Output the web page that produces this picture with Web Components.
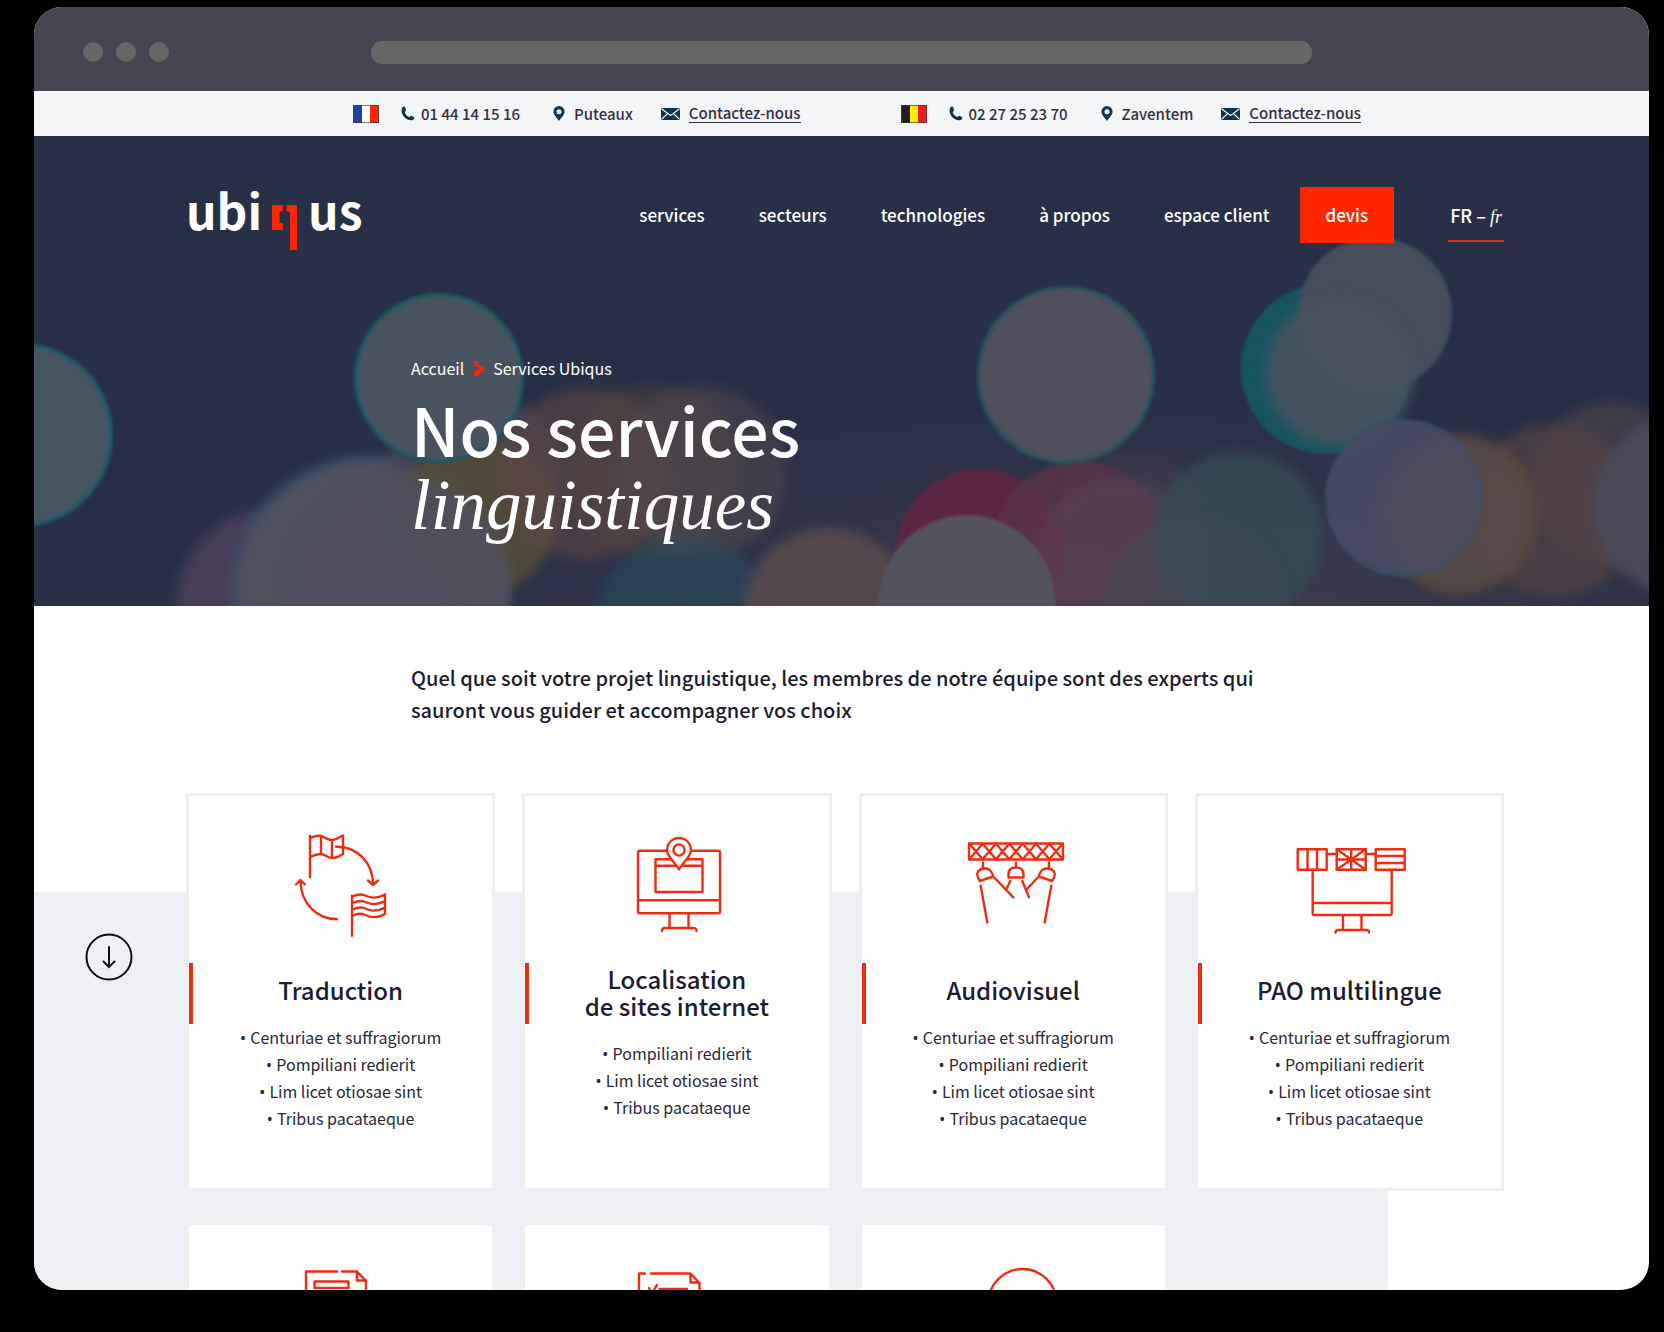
<!DOCTYPE html>
<html lang="fr">
<head>
<meta charset="utf-8">
<meta name="viewport" content="width=device-width, initial-scale=1">
<title>Ubiqus - Nos services linguistiques</title>
<style>
	:root {
		--red: #ff2600;
		--line-red: #ee2c12;
		--ink: #1d1b30;
		--grey: #eff0f4;
		--sans: "Noto Sans CJK SC", "Noto Sans", sans-serif;
		--serif: "Liberation Serif", serif;
	}
	body {
		margin: 0;
		background: #000;
		color: var(--ink);
		font-family: var(--sans);
	}
</style>
</head>
<body>
<browser-window>
	<top-bar>
		<contact-group country="fr" phone="01 44 14 15 16" city="Puteaux"></contact-group>
		<contact-group country="be" phone="02 27 25 23 70" city="Zaventem"></contact-group>
	</top-bar>
	<hero-banner>
		<site-nav slot="nav"></site-nav>
		<span slot="parent">Accueil</span>
		<span slot="current">Services Ubiqus</span>
		<span slot="title">Nos services</span>
		<em slot="subtitle">linguistiques</em>
	</hero-banner>
	<services-section>
		<p slot="intro">Quel que soit votre projet linguistique, les membres de notre équipe sont des experts qui sauront vous guider et accompagner vos choix</p>
		<service-card icon="translate">
			<span slot="title">Traduction</span>
			<li>Centuriae et suffragiorum</li>
			<li>Pompiliani redierit</li>
			<li>Lim licet otiosae sint</li>
			<li>Tribus pacataeque</li>
		</service-card>
		<service-card icon="localise" two-lines>
			<span slot="title">Localisation<br>de sites internet</span>
			<li>Pompiliani redierit</li>
			<li>Lim licet otiosae sint</li>
			<li>Tribus pacataeque</li>
		</service-card>
		<service-card icon="lights">
			<span slot="title">Audiovisuel</span>
			<li>Centuriae et suffragiorum</li>
			<li>Pompiliani redierit</li>
			<li>Lim licet otiosae sint</li>
			<li>Tribus pacataeque</li>
		</service-card>
		<service-card icon="publish">
			<span slot="title">PAO multilingue</span>
			<li>Centuriae et suffragiorum</li>
			<li>Pompiliani redierit</li>
			<li>Lim licet otiosae sint</li>
			<li>Tribus pacataeque</li>
		</service-card>
		<service-card icon="report"></service-card>
		<service-card icon="checklist"></service-card>
		<service-card icon="round"></service-card>
	</services-section>
</browser-window>

<script>
class BrowserWindow extends HTMLElement {
	constructor() {
		super();
		this.attachShadow({ mode: "open" }).innerHTML = `
			<style>
				:host {
					display: flex;
					flex-direction: column;
					box-sizing: border-box;
					height: 100vh;
					padding: 7px 15px 42px 34px;
				}
				.frame {
					flex: 1;
					min-height: 0;
					overflow: hidden;
					border-radius: 28px;
					background: #fff;
				}
				.chrome {
					display: grid;
					grid-template-columns: 337px 1fr 337px;
					align-items: center;
					height: 84px;
					padding-top: 6px;
					box-sizing: border-box;
					background: #474350;
				}
				.dots {
					display: flex;
					gap: 13px;
					padding-left: 49px;
				}
				.dots i {
					width: 20px;
					height: 20px;
					border-radius: 50%;
					background: #676767;
				}
				.address {
					height: 23px;
					border-radius: 11px;
					background: #676767;
				}
			</style>
			<div class="frame">
				<div class="chrome">
					<div class="dots"><i></i><i></i><i></i></div>
					<div class="address"></div>
				</div>
				<slot></slot>
			</div>
		`;
	}
}

class TopBar extends HTMLElement {
	constructor() {
		super();
		this.attachShadow({ mode: "open" }).innerHTML = `
			<style>
				:host {
					display: flex;
					justify-content: center;
					align-items: center;
					gap: 100px;
					height: 45px;
					padding-left: 31px;
					background: #f4f5f7;
				}
			</style>
			<slot></slot>
		`;
	}
}

const FLAGS = {
	fr: ["#21409a", "#ffffff", "#ff2600"],
	be: ["#231f20", "#ffee00", "#ed1c24"],
};

class ContactGroup extends HTMLElement {
	connectedCallback() {
		const [a, b, c] = FLAGS[this.getAttribute("country")];
		this.attachShadow({ mode: "open" }).innerHTML = `
			<style>
				:host {
					display: flex;
					align-items: center;
					color: #35303f;
					font-size: 15px;
					line-height: 24px;
					font-weight: 500;
				}
				.flag { margin-right: 22px; }
				.item {
					display: flex;
					align-items: center;
					white-space: nowrap;
				}
				.phone { gap: 6px; margin-right: 33px; }
				.city { gap: 9px; margin-right: 28px; }
				.mail { gap: 9px; }
				a { color: inherit; text-decoration: none; }
				.mail a { border-bottom: 1px solid; line-height: 18px; }
				svg { display: block; fill: #12354a; }
			</style>
			<svg class="flag" width="26" height="18" viewBox="0 0 26 18">
				<rect width="9" height="18" fill="${a}"/>
				<rect x="9" width="9" height="18" fill="${b}"/>
				<rect x="17" width="9" height="18" fill="${c}"/>
				<rect x=".5" y=".5" width="25" height="17" fill="none" stroke="#4a3a40" stroke-width="1" opacity=".7"/>
			</svg>
			<div class="item phone">
				<svg width="14" height="15" viewBox="0 0 14 15"><path d="M1.400 1.200C2.400.2 3.800.1 4.300 1.200L5 4.200C5 5.300 3.700 5.300 3.700 6.200C4 8.100 6.200 10.400 8.200 10.900C9.200 11 9.200 9.700 10.200 9.700L13 11C13.900 11.800 13 13.200 11.800 14C6.800 16-2.200 8.800 1.400 1.200Z"/></svg>
				<a href="#">${this.getAttribute("phone")}</a>
			</div>
			<div class="item city">
				<svg width="12" height="15" viewBox="0 0 12 15"><path fill-rule="evenodd" d="M6 0a5.600 5.600 0 0 1 5.600 5.600C11.600 9 8 12 6 15 4 12 .4 9 .4 5.600A5.600 5.600 0 0 1 6 0Zm0 3.200a2.500 2.500 0 1 0 0 5 2.500 2.500 0 0 0 0-5Z"/></svg>
				<span>${this.getAttribute("city")}</span>
			</div>
			<div class="item mail">
				<svg width="19" height="12" viewBox="0 0 19 12"><rect width="19" height="12" rx="1"/><path d="M.5.8 9.500 7.500 18.500.8M.5 11.300 6.600 5.600M18.500 11.300 12.400 5.600" fill="none" stroke="#f4f5f7" stroke-width="1.200"/></svg>
				<a href="#">Contactez-nous</a>
			</div>
		`;
	}
}

class SiteLogo extends HTMLElement {
	constructor() {
		super();
		this.attachShadow({ mode: "open" }).innerHTML = `
			<style>
				:host { display: block; }
				a {
					display: flex;
					align-items: flex-start;
					gap: 10px;
					color: #fff;
					font-size: 48px;
					line-height: 44px;
					font-weight: 700;
					text-decoration: none;
				}
				svg { margin-top: 17px; }
			</style>
			<a href="#" aria-label="ubiqus">
				<span>ubi</span>
				<svg width="26" height="47" viewBox="0 0 26 47" fill="#ff2600"><path d="M0 1H11V7L7.500 8V18.500L11 19.500V26H0Z"/><path d="M14.500 1H25V46H18V8L14.500 7Z"/></svg>
				<span>us</span>
			</a>
		`;
	}
}

class SiteNav extends HTMLElement {
	constructor() {
		super();
		this.attachShadow({ mode: "open" }).innerHTML = `
			<style>
				:host {
					display: flex;
					justify-content: space-between;
					align-items: flex-start;
					color: #fff;
					font-size: 17px;
					line-height: 26px;
					font-weight: 500;
				}
				.right, nav { display: flex; align-items: center; }
				nav { gap: 54px; }
				a { color: inherit; text-decoration: none; white-space: nowrap; }
				.quote {
					margin-left: 30px;
					padding: 15px 26px;
					background: var(--red);
				}
				button {
					margin: 0 0 0 54px;
					padding: 14px 2px 12px;
					border: 0;
					border-bottom: 2px solid #e02b1a;
					background: none;
					color: inherit;
					font: inherit;
					font-size: 18px;
				}
				button em { font-family: var(--serif); font-weight: 400; line-height: 18px; }
			</style>
			<site-logo></site-logo>
			<div class="right">
				<nav>
					<a href="#">services</a>
					<a href="#">secteurs</a>
					<a href="#">technologies</a>
					<a href="#">à propos</a>
					<a href="#">espace client</a>
				</nav>
				<a class="quote" href="#">devis</a>
				<button type="button">FR – <em>fr</em></button>
			</div>
		`;
	}
}

// Out of focus street lights: cx, cy, r, fill, opacity, blur (1 = sharp, 2 = soft), rim colour
const LIGHTS = [
	[240, 470, 98, "#55455f", 0.7, 2],
	[335, 458, 136, "#50515f", 1, 2, "#25506a"],
	[440, 345, 90, "#4b4a5a", 0.6, 2],
	[445, 380, 78, "#554e38", 0.85, 2],
	[552, 338, 86, "#5e4444", 0.6, 2],
	[620, 335, 86, "#57463e", 0.45, 2],
	[667, 336, 86, "#55484f", 0.5, 2],
	[650, 490, 90, "#24505d", 0.5, 2],
	[365, 455, 112, "#50505f", 0.9, 2],
	[-13, 299, 90, "#475460", 1, 1, "#1b5a66"],
	[405, 242, 83, "#49535f", 1, 1, "#1a5862"],
	[794, 476, 84, "#58494d", 0.9, 2],
	[1100, 400, 84, "#463a4e", 0.5, 2],
	[946, 417, 84, "#5c2744", 1, 1],
	[1045, 413, 88, "#5b3048", 0.75, 1],
	[1085, 425, 84, "#58485a", 0.4, 2],
	[1205, 399, 84, "#354b54", 0.8, 2],
	[1160, 470, 90, "#3d4b55", 0.5, 2],
	[1032, 239, 87, "#50505d", 1, 1, "#2a525d"],
	[933, 467, 88, "#52525e", 1, 1],
	[1578, 346, 80, "#50444c", 0.6, 2],
	[1520, 374, 86, "#544344", 0.7, 2],
	[1425, 378, 80, "#59463a", 0.9, 2],
	[1292, 233, 85, "#17545f", 1, 1],
	[1341, 178, 75, "#464e5a", 1, 1, "#3c505b"],
	[1306, 236, 74, "#47525f", 0.9, 2],
	[1370, 362, 77, "#464c62", 0.95, 1, "#3a4d64"],
	[1425, 378, 74, "#56505c", 0.35, 2],
	[1650, 370, 90, "#4c4c5b", 0.9, 2],
];

class HeroBanner extends HTMLElement {
	constructor() {
		super();
		const lights = LIGHTS.map(
			([cx, cy, r, fill, opacity, blur, rim]) =>
				`<circle cx="${cx}" cy="${cy}" r="${r}" fill="${fill}" opacity="${opacity}" filter="url(#b${blur})" ${rim ? `stroke="${rim}" stroke-width="4"` : ""}/>`
		).join("");
		this.attachShadow({ mode: "open" }).innerHTML = `
			<style>
				:host {
					display: block;
					position: relative;
					overflow: hidden;
					background: #283047;
					color: #fff;
				}
				.bokeh {
					position: absolute;
					inset: 0;
					width: 100%;
					height: 100%;
				}
				.content {
					position: relative;
					padding: 51px 145px 60px 152px;
				}
				.text { padding: 105px 0 0 225px; }
				.crumbs {
					display: flex;
					align-items: center;
					gap: 9px;
					font-size: 16px;
					line-height: 24px;
				}
				h1 {
					margin: 12px 0 0;
					font-size: 66px;
					line-height: 72px;
					font-weight: 500;
				}
				h1 slot { display: block; }
				.sub {
					font-family: var(--serif);
					font-size: 71px;
					line-height: 82px;
					font-weight: 400;
				}
			</style>
			<svg class="bokeh" viewBox="0 0 1615 470" preserveAspectRatio="xMidYMax slice">
				<defs>
					<filter id="b1"><feGaussianBlur stdDeviation="1.500"/></filter>
					<filter id="b2" x="-20%" y="-20%" width="140%" height="140%"><feGaussianBlur stdDeviation="6"/></filter>
					<radialGradient id="haze">
						<stop offset="0" stop-color="#484150" stop-opacity=".8"/>
						<stop offset="1" stop-color="#443e50" stop-opacity="0"/>
					</radialGradient>
				</defs>
				<ellipse cx="1100" cy="480" rx="760" ry="210" fill="url(#haze)"/>
				${lights}
			</svg>
			<div class="content">
				<slot name="nav"></slot>
				<div class="text">
					<div class="crumbs">
						<slot name="parent"></slot>
						<svg width="11" height="15" viewBox="0 0 11 15" fill="#ff2600"><path d="M1 0H5V4H8V6H11V10H8V12H6V15H1V11H3V9H6V6H3V4H1Z"/></svg>
						<slot name="current"></slot>
					</div>
					<h1>
						<slot name="title"></slot>
						<slot class="sub" name="subtitle"></slot>
					</h1>
				</div>
			</div>
		`;
	}
}

class ServicesSection extends HTMLElement {
	constructor() {
		super();
		this.attachShadow({ mode: "open" }).innerHTML = `
			<style>
				:host { display: block; }
				.intro {
					padding: 56px 340px 0 377px;
					font-size: 20px;
					line-height: 32px;
					font-weight: 500;
				}
				::slotted(p) { margin: 0; }
				.body {
					position: relative;
					padding: 67px 145px 60px 152px;
				}
				.back {
					position: absolute;
					inset: 166px 261px 0 0;
					background: var(--grey);
				}
				.grid {
					position: relative;
					display: grid;
					grid-template-columns: repeat(4, 1fr);
					gap: 31px 27px;
				}
				.down {
					position: absolute;
					top: 207px;
					left: 51px;
					width: 48px;
					height: 48px;
					padding: 0;
					border: 0;
					background: none;
				}
				.down svg {
					display: block;
					fill: none;
					stroke: #0d0d14;
					stroke-width: 2;
					stroke-linecap: round;
				}
			</style>
			<div class="intro"><slot name="intro"></slot></div>
			<div class="body">
				<div class="back"></div>
				<button class="down" type="button" aria-label="Descendre">
					<svg width="48" height="48" viewBox="0 0 48 48"><circle cx="24" cy="24" r="22.500"/><path d="M24 14V34M18.500 28.500L24 34L29.500 28.500"/></svg>
				</button>
				<div class="grid"><slot></slot></div>
			</div>
		`;
	}
}

const ICONS = {
	translate: `
		<path d="M29 6V47M29 8C33 7 36 5 40 6C44 7 46 10 51 10C55 10 59 7 62 5.500V24C59 26 55 28 51 28C46 28 44 24 40 24C36 24 33 25 29 27M40 6V24M51 10V28"/>
		<path d="M55 16.700C76 16 92 33 92 54M87 50.500L92 55L97 50.500"/>
		<path d="M56 89.300C36 89 20 74 19.500 51M15 54.500L19.500 50L24 54.500"/>
		<path d="M71 65.700V105.700M104 64.500V83M71 66.500C75 65 79 63.500 83 65C88 67 93 70 104 64.500M71 73C75 71.500 79 70 83 71.500C88 73.500 93 76.500 104 71M71 79.500C75 78 79 76.500 83 78C88 80 93 83 104 77.500M71 86C75 84 79 83 83 84.500C88 87 95 89.500 104 84"/>`,
	localise: `
		<rect x="21" y="20.700" width="82" height="62.500" rx="2"/>
		<path d="M21 70.300H103M38.500 29.300H85.500V62H38.500ZM38.500 35.700H85.500M52.500 83V97.500M71.500 83V97.500M45 101C45 98.500 46 98 48 98H76C78.500 98 79.500 98.500 79.500 101"/>
		<path fill="#fff" d="M62 39.300C58 32 50 27 50 20A12 12 0 0 1 74 20C74 27 66 32 62 39.300Z"/>
		<circle cx="62" cy="20" r="5.600"/>`,
	lights: `
		<path d="M16 13.500H110V29.500H16Z"/>
		<path d="M17 14.500L29 28.500M29 14.500L17 28.500M30.300 14.500L42.300 28.500M42.300 14.500L30.300 28.500M43.600 14.500L55.600 28.500M55.600 14.500L43.600 28.500M57 14.500L69 28.500M69 14.500L57 28.500M70.400 14.500L82.400 28.500M82.400 14.500L70.400 28.500M83.700 14.500L95.700 28.500M95.700 14.500L83.700 28.500M97 14.500L109 28.500M109 14.500L97 28.500"/>
		<path d="M63 32.500V37M30 32.500V38M96 32.500V38M55.500 47.500V44C55.500 40 58 37.500 63 37.500S70.500 40 70.500 44V47.500Z"/>
		<path d="M26.700 51C22.500 44 24 40.500 29 39C34 37.500 38 38.500 40.300 46.500ZM99.300 51C103.500 44 102 40.500 97 39C92 37.500 88 38.500 85.700 46.500Z"/>
		<path d="M27.700 55.700L34.300 92.500M41.700 48L60.300 67.300M57.300 51L53.500 59M98.300 55.700L91.700 92.500M84.300 48L74 59M69.300 51L76 67.300"/>`,
	publish: `
		<path d="M8.700 19.300H37.700V39.700H8.700ZM47.700 19.300H76.700V39.700H47.700ZM86.700 19.300H115.700V39.700H86.700ZM18.500 19.300V39.700M28 19.300V39.700M86.700 26H115.700M86.700 33H115.700"/>
		<path d="M47.700 19.300L76.700 39.700M76.700 19.300L47.700 39.700M62.200 19.300V39.700M47.700 29.500H76.700M37.700 24H47.700M76.700 24H86.700"/>
		<path d="M23.700 39.700V83.500C23.700 84.500 24.200 85 25.200 85H101.200C102.200 85 102.700 84.500 102.700 83.500V39.700M23.700 73H102.700M54 85V99.500M72.500 85V99.500M46.500 102.500C46.500 100.500 47.500 100 49.500 100H77C79 100 80 100.500 80 102.500"/>`,
	report: `
		<path d="M25 110V12.500H56M61 12.500H76L85 22V110M76 12.500V21.500H85M33.500 22.500H67.500V29H33.500Z"/>`,
	checklist: `
		<path d="M22 110V14.500H28M34 14.500H73.500L82.500 24V110M73.500 14.500V23.500H82.500M42.500 30H70M32 29L35 34L40 26"/>`,
	round: `<circle cx="69.500" cy="44" r="34"/>`,
};

class ServiceCard extends HTMLElement {
	connectedCallback() {
		const titled = this.querySelector("[slot=title]");
		this.attachShadow({ mode: "open" }).innerHTML = `
			<style>
				:host {
					display: block;
					min-height: 391px;
					border: 3px solid var(--grey);
					background: #fff;
					text-align: center;
				}
				svg {
					display: block;
					margin: 34px auto 23px;
					fill: none;
					stroke: var(--line-red);
					stroke-width: 2.400;
					stroke-linecap: round;
					stroke-linejoin: round;
				}
				h2 {
					display: flex;
					justify-content: center;
					align-items: center;
					box-sizing: border-box;
					height: 61px;
					margin: 0;
					padding: 0 4px 8px 0;
					border-left: 4px solid var(--line-red);
					font-size: 24px;
					line-height: 27px;
					font-weight: 500;
				}
				ul {
					margin: 0;
					padding: 0 0 56px;
					color: #2a2838;
					font-size: 16px;
					line-height: 27px;
					list-style: none;
				}
				:host([two-lines]) h2 { padding-bottom: 4px; }
				:host([two-lines]) ul { padding-top: 16px; }
				::slotted(li) { list-style: none; }
				::slotted(li)::before {
					content: "• ";
					font-family: "Noto Sans", sans-serif;
					line-height: 16px;
				}
			</style>
			<svg width="120" height="110" viewBox="0 0 120 110">${ICONS[this.getAttribute("icon")]}</svg>
			${titled ? `<h2><slot name="title"></slot></h2><ul><slot></slot></ul>` : ""}
		`;
	}
}

customElements.define("browser-window", BrowserWindow);
customElements.define("top-bar", TopBar);
customElements.define("contact-group", ContactGroup);
customElements.define("site-logo", SiteLogo);
customElements.define("site-nav", SiteNav);
customElements.define("hero-banner", HeroBanner);
customElements.define("services-section", ServicesSection);
customElements.define("service-card", ServiceCard);
</script>
</body>
</html>
